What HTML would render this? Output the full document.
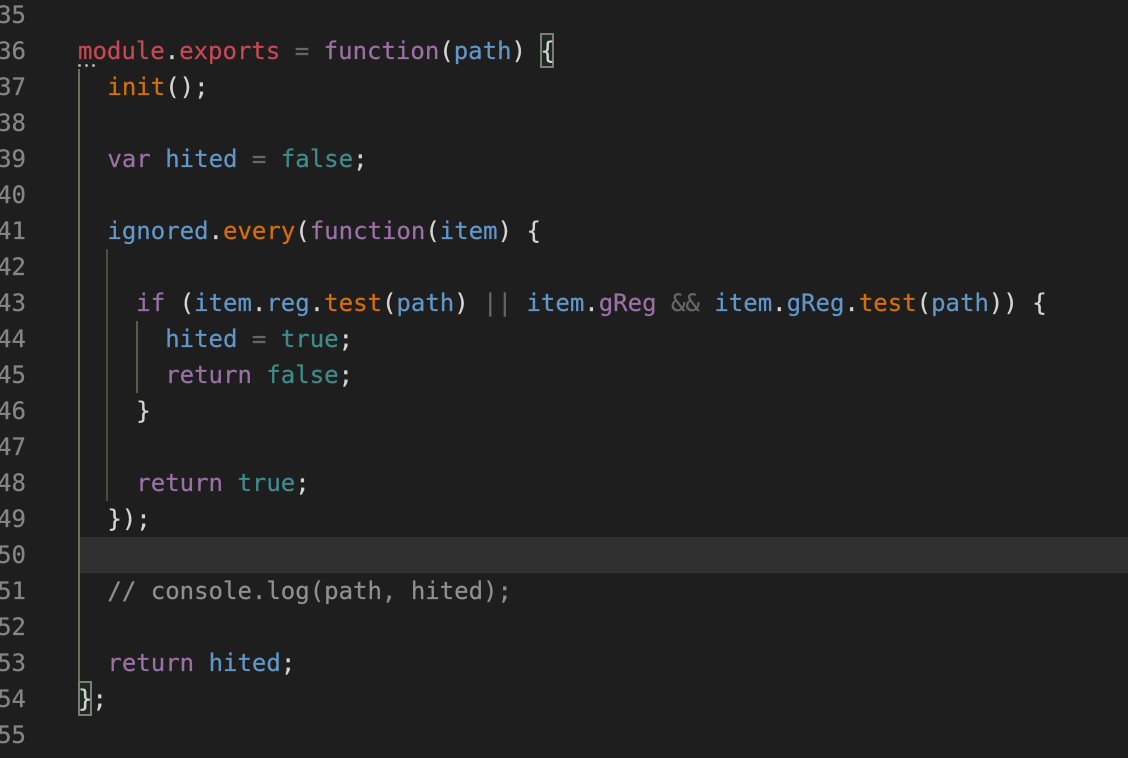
<!DOCTYPE html>
<html><head><meta charset="utf-8"><style>
html,body{margin:0;padding:0;width:1128px;height:758px;overflow:hidden;background:#1e1e1e}
.l{position:absolute;left:78px;height:36px;line-height:36px;white-space:pre;font-family:"DejaVu Sans Mono",monospace;font-size:24px;color:#d4d4d4;-webkit-text-stroke:0.25px currentColor}
.i{left:78.5px}
.n{position:absolute;right:1102px;height:36px;line-height:36px;font-family:"DejaVu Sans Mono",monospace;font-size:24px;color:#858585;-webkit-text-stroke:0.25px currentColor}
.r{color:#c74853}.k{color:#9a70a5}.b{color:#6096c8}.o{color:#d56e0a}.t{color:#3f8b8b}.g{color:#666}.c{color:#8f8f8f}.w{color:#d4d4d4}
.a{position:absolute}
</style></head><body>
<div class="a" style="left:80px;right:0;top:537px;height:36px;background:#303030"></div>
<div class="a" style="left:78px;top:69px;width:2px;height:612px;background:#70705a"></div>
<div class="a" style="left:106px;top:249px;width:2px;height:252px;background:#4c4c3c"></div>
<div class="a" style="left:136px;top:321px;width:2px;height:72px;background:#5c5c44"></div>
<div class="a" style="left:540px;top:33px;width:10px;height:31px;border:2px solid #7c7c7c;background:#1c2b1e"></div>
<div class="a" style="left:78px;top:681px;width:10px;height:31px;border:2px solid #7c7c7c;background:#1c2b1e"></div>
<div class="a" style="left:78px;top:64px;width:3px;height:3px;border-radius:50%;background:#aaa"></div>
<div class="a" style="left:85px;top:64px;width:3px;height:3px;border-radius:50%;background:#aaa"></div>
<div class="a" style="left:92px;top:64px;width:3px;height:3px;border-radius:50%;background:#aaa"></div>
<div class="n" style="top:-3px">35</div><div class="n" style="top:33px">36</div><div class="n" style="top:69px">37</div><div class="n" style="top:105px">38</div><div class="n" style="top:141px">39</div><div class="n" style="top:177px">40</div><div class="n" style="top:213px">41</div><div class="n" style="top:249px">42</div><div class="n" style="top:285px">43</div><div class="n" style="top:321px">44</div><div class="n" style="top:357px">45</div><div class="n" style="top:393px">46</div><div class="n" style="top:429px">47</div><div class="n" style="top:465px">48</div><div class="n" style="top:501px">49</div><div class="n" style="top:537px">50</div><div class="n" style="top:573px">51</div><div class="n" style="top:609px">52</div><div class="n" style="top:645px">53</div><div class="n" style="top:681px">54</div><div class="n" style="top:717px">55</div>
<div class="l" style="top:33px"><span class="r">module</span>.<span class="r">exports</span> <span class="g">=</span> <span class="k">function</span>(<span class="b">path</span>) {</div>
<div class="l i" style="top:69px">  <span class="o">init</span>();</div>
<div class="l i" style="top:141px">  <span class="k">var</span> <span class="b">hited</span> <span class="g">=</span> <span class="t">false</span>;</div>
<div class="l i" style="top:213px">  <span class="b">ignored</span>.<span class="o">every</span>(<span class="k">function</span>(<span class="b">item</span>) {</div>
<div class="l i" style="top:285px">    <span class="k">if</span> (<span class="b">item</span>.<span class="b">reg</span>.<span class="o">test</span>(<span class="b">path</span>) <span class="g">||</span> <span class="b">item</span>.<span class="k">gReg</span> <span class="g">&amp;&amp;</span> <span class="b">item</span>.<span class="b">gReg</span>.<span class="o">test</span>(<span class="b">path</span>)) {</div>
<div class="l i" style="top:321px">      <span class="b">hited</span> <span class="g">=</span> <span class="t">true</span>;</div>
<div class="l i" style="top:357px">      <span class="k">return</span> <span class="t">false</span>;</div>
<div class="l i" style="top:393px">    }</div>
<div class="l i" style="top:465px">    <span class="k">return</span> <span class="t">true</span>;</div>
<div class="l i" style="top:501px">  });</div>
<div class="l i" style="top:573px"><span class="c">  // console.log(path, hited);</span></div>
<div class="l i" style="top:645px">  <span class="k">return</span> <span class="b">hited</span>;</div>
<div class="l" style="top:681px">};</div>
</body></html>
